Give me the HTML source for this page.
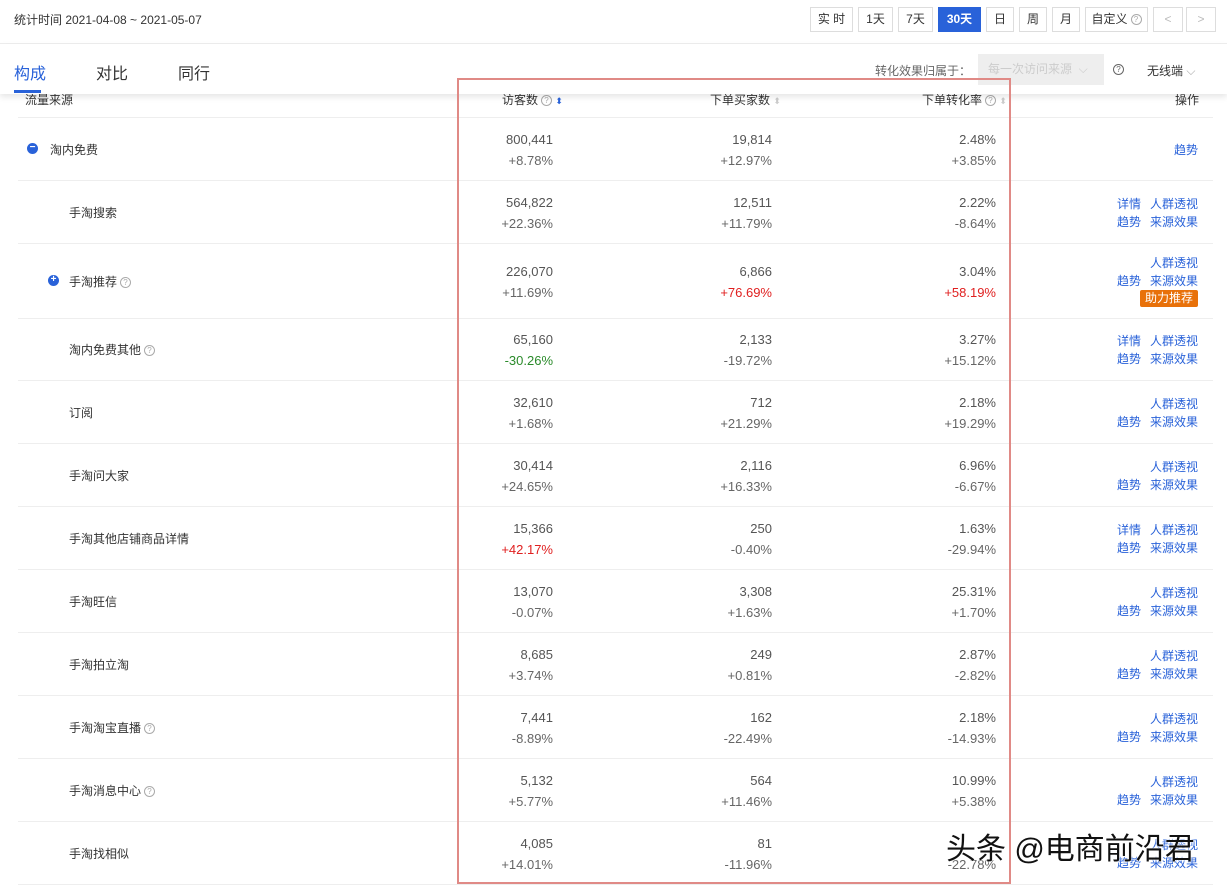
<!DOCTYPE html><html><head><meta charset="utf-8"><style>
*{margin:0;padding:0;box-sizing:border-box}
body{width:1227px;height:885px;overflow:hidden;background:#fff;font-family:"Liberation Sans","Noto Sans CJK SC",sans-serif;font-size:12px;color:#333;position:relative}
.a{position:absolute;white-space:nowrap}
.btn{position:absolute;top:7px;height:25px;border:1px solid #ddd;font-size:12px;line-height:23px;text-align:center;color:#333;background:#fff}
.r{text-align:right}
.g{color:#666}
.red{color:#e02020}
.grn{color:#2a8a2a}
.lk{color:#2962d9}
.line{position:absolute;left:18px;right:14px;height:1px;background:#eee}
.q{display:inline-block;width:11px;height:11px;border:1px solid #aaa;border-radius:50%;font-size:8px;line-height:9px;text-align:center;color:#aaa;vertical-align:1px;margin-left:3px}
</style></head><body>
<div class="a" style="left:14px;top:11px;font-size:12px;color:#333">统计时间 2021-04-08 ~ 2021-05-07</div>
<div class="btn" style="left:810px;width:43px">实 时</div>
<div class="btn" style="left:858px;width:35px">1天</div>
<div class="btn" style="left:898px;width:35px">7天</div>
<div class="btn" style="left:938px;width:43px;background:#2962d9;border-color:#2962d9;color:#fff;font-weight:bold">30天</div>
<div class="btn" style="left:986px;width:28px">日</div>
<div class="btn" style="left:1019px;width:28px">周</div>
<div class="btn" style="left:1052px;width:28px">月</div>
<div class="btn" style="left:1085px;width:63px">自定义<span class="q">?</span></div>
<div class="btn" style="left:1153px;width:30px;color:#bbb">&lt;</div>
<div class="btn" style="left:1186px;width:30px;color:#bbb">&gt;</div>
<div class="a" style="left:0;top:43px;width:1227px;height:1px;background:#eee"></div>
<div class="a" style="left:0;top:44px;width:1227px;height:50px;background:#fff;box-shadow:0 3px 6px rgba(0,0,0,.1);z-index:2">
<div class="a" style="left:14px;top:16px;font-size:16px;color:#2962d9">构成</div>
<div class="a" style="left:14px;top:46px;width:27px;height:3px;background:#2962d9"></div>
<div class="a" style="left:96px;top:16px;font-size:16px">对比</div>
<div class="a" style="left:178px;top:16px;font-size:16px">同行</div>
<div class="a" style="left:875px;top:18px;color:#666">转化效果归属于：</div>
<div class="a" style="left:978px;top:10px;width:126px;height:31px;background:#eee;color:#ccc;line-height:31px;padding-left:10px">每一次访问来源 &nbsp;⌵</div>
<div class="a" style="left:1110px;top:18px"><span class="q" style="color:#666;border-color:#666">?</span></div>
<div class="a" style="left:1147px;top:18px">无线端 <span style="color:#aaa">⌵</span></div>
</div>
<div class="a" style="left:25px;top:91px">流量来源</div>
<div class="a" style="left:502px;top:91px">访客数<span class="q">?</span> <span style="color:#2962d9;font-size:9px">⬍</span></div>
<div class="a" style="left:710px;top:91px">下单买家数 <span style="color:#ccc;font-size:9px">⬍</span></div>
<div class="a" style="left:922px;top:91px">下单转化率<span class="q">?</span> <span style="color:#ccc;font-size:9px">⬍</span></div>
<div class="a" style="left:1175px;top:91px">操作</div>
<div class="line" style="top:117px"></div>
<div id="rows"></div>
<div class="a" style="left:457px;top:78px;width:554px;height:806px;border:2px solid #e08a86;z-index:3"></div>
<div class="a" style="left:946px;top:824px;font-size:30px;color:#111;z-index:4;text-shadow:0 0 2px #fff,0 0 2px #fff">头条 @电商前沿君</div>
<script>
var R=[
["淘内免费",0,"800,441","+8.78%","19,814","+12.97%","2.48%","+3.85%",117,63,"m",["","趋势"]],
["手淘搜索",0,"564,822","+22.36%","12,511","+11.79%","2.22%","-8.64%",180,63,"",["详情 人群透视","趋势 来源效果"]],
["手淘推荐",1,"226,070","+11.69%","6,866","+76.69%r","3.04%","+58.19%r",243,75,"p",["人群透视","趋势 来源效果","B"]],
["淘内免费其他",1,"65,160","-30.26%g","2,133","-19.72%","3.27%","+15.12%",318,62,"",["详情 人群透视","趋势 来源效果"]],
["订阅",0,"32,610","+1.68%","712","+21.29%","2.18%","+19.29%",380,63,"",["人群透视","趋势 来源效果"]],
["手淘问大家",0,"30,414","+24.65%","2,116","+16.33%","6.96%","-6.67%",443,63,"",["人群透视","趋势 来源效果"]],
["手淘其他店铺商品详情",0,"15,366","+42.17%r","250","-0.40%","1.63%","-29.94%",506,63,"",["详情 人群透视","趋势 来源效果"]],
["手淘旺信",0,"13,070","-0.07%","3,308","+1.63%","25.31%","+1.70%",569,63,"",["人群透视","趋势 来源效果"]],
["手淘拍立淘",0,"8,685","+3.74%","249","+0.81%","2.87%","-2.82%",632,63,"",["人群透视","趋势 来源效果"]],
["手淘淘宝直播",1,"7,441","-8.89%","162","-22.49%","2.18%","-14.93%",695,63,"",["人群透视","趋势 来源效果"]],
["手淘消息中心",1,"5,132","+5.77%","564","+11.46%","10.99%","+5.38%",758,63,"",["人群透视","趋势 来源效果"]],
["手淘找相似",0,"4,085","+14.01%","81","-11.96%","","-22.78%",821,63,"",["人群透视","趋势 来源效果"]]];
function v(s){var c="g";if(s.slice(-1)=="r"){c="red";s=s.slice(0,-1)}else if(s.slice(-1)=="g"){c="grn";s=s.slice(0,-1)}return '<span class="'+c+'">'+s+'</span>'}
function ops(s){return s.split(" ").map(function(w){return '<span class="lk" style="margin-left:9px">'+w+'</span>'}).join("")}
var h="";R.forEach(function(r){var t=r[8],H=r[9],mid=t+H/2;
var nx=r[10]=="m"?50:69;
h+='<div class="a" style="left:'+nx+'px;top:'+(mid-8)+'px">'+r[0]+(r[1]?'<span class="q">?</span>':'')+'</div>';
if(r[10]){h+='<div class="a" style="left:'+(r[10]=="m"?27:48)+'px;top:'+(mid-6)+'px;width:11px;height:11px;border-radius:50%;background:#2962d9;color:#fff;font-size:10px;line-height:10px;text-align:center;font-weight:bold">'+(r[10]=="m"?"−":"+")+'</div>'}
var y1=mid-17,y2=mid+4;
[[553,2],[772,4],[996,6]].forEach(function(c){h+='<div class="a r" style="right:'+(1227-c[0])+'px;top:'+y1+'px;font-size:13px;color:#555">'+r[c[1]]+'</div><div class="a r" style="right:'+(1227-c[0])+'px;top:'+y2+'px;font-size:13px">'+v(r[c[1]+1])+'</div>'});
var o=r[11];
if(o[0]===""){h+='<div class="a r lk" style="right:29px;top:'+(mid-8)+'px">'+o[1]+'</div>'}
else{var base=o.length==3?mid-27:mid-17;for(var i=0;i<o.length;i++){if(o[i]=="B"){h+='<div class="a" style="right:29px;top:'+(base+36)+'px;background:#e8710a;color:#fff;padding:0 5px;border-radius:2px;line-height:17px">助力推荐</div>'}else h+='<div class="a r" style="right:29px;top:'+(base+i*18)+'px">'+ops(o[i])+'</div>'}}
h+='<div class="line" style="top:'+(t+H)+'px"></div>'});
document.getElementById("rows").innerHTML=h;
</script>
</body></html>
